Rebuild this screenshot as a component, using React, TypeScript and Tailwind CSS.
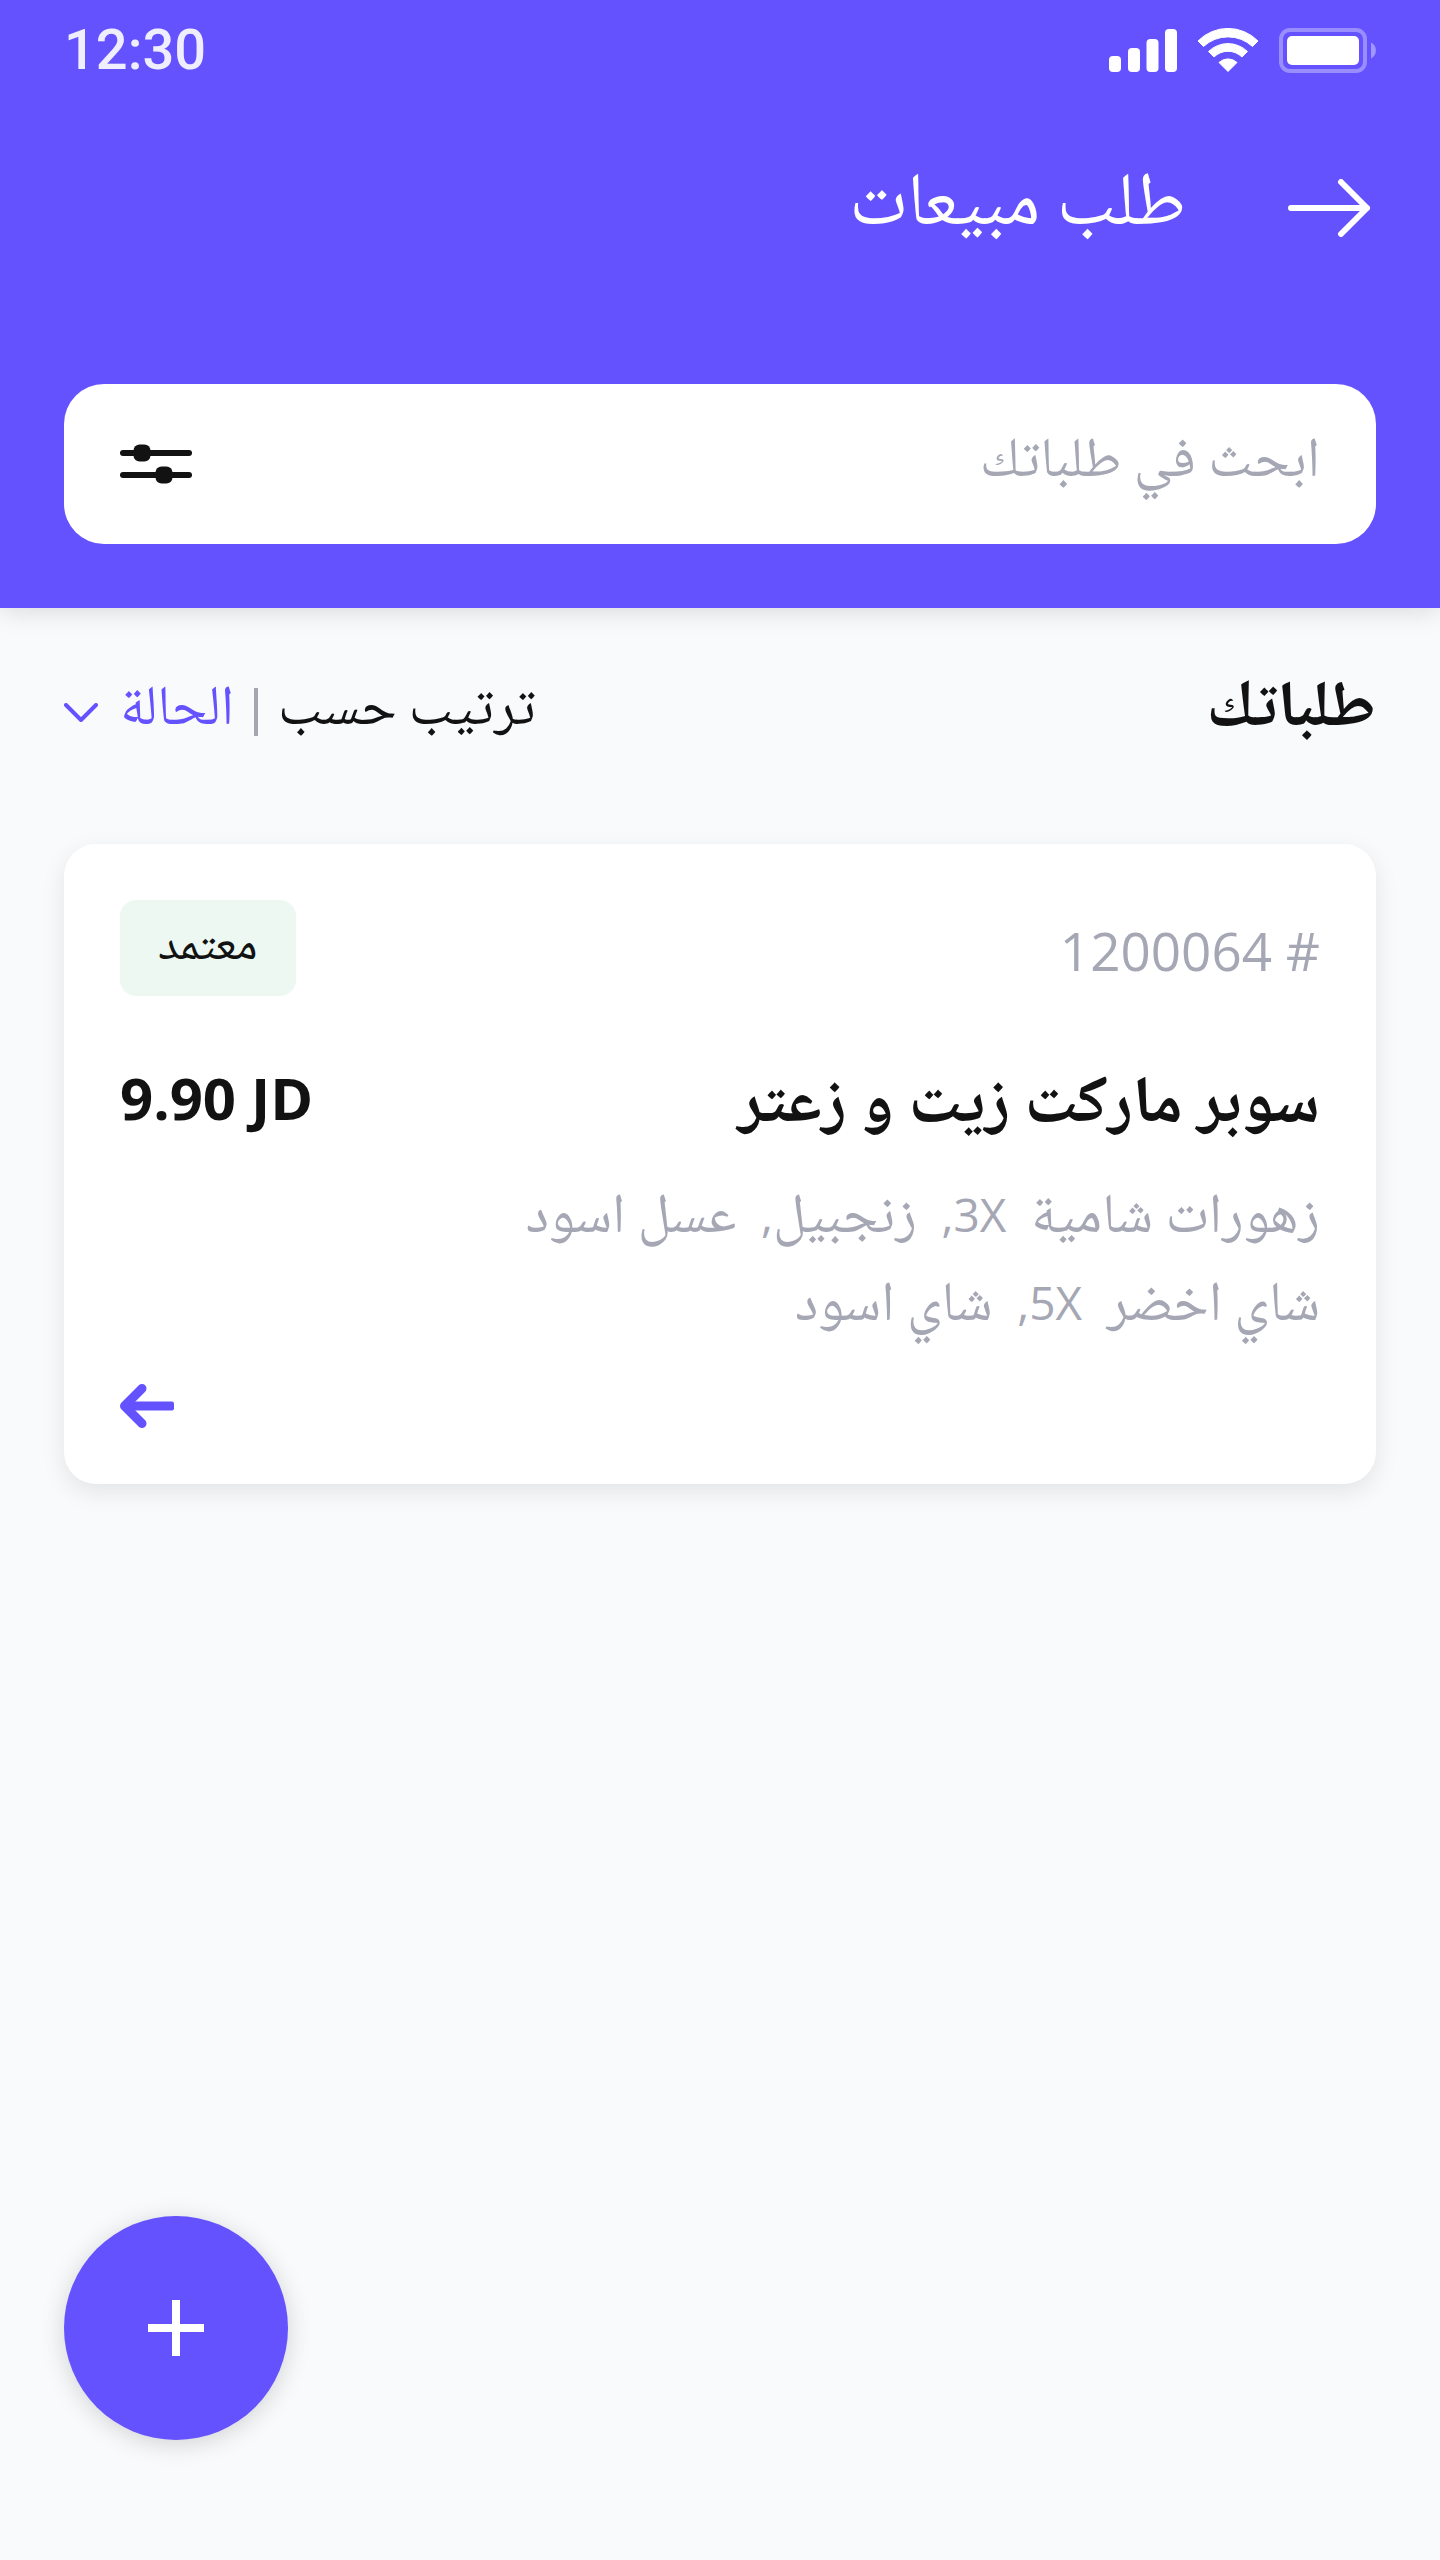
import React from "react";

const arabic = "font-['Noto_Naskh_Arabic','Noto_Sans_Arabic','DejaVu_Sans',sans-serif]";
const latin = "font-['Open_Sans','Noto_Sans',sans-serif]";

function SignalIcon() {
  return (
    <svg width="68" height="44" viewBox="0 0 68 44" fill="currentColor" aria-hidden="true">
      <rect x="0" y="28" width="12" height="16" rx="4" />
      <rect x="19" y="20" width="12" height="24" rx="4" />
      <rect x="37.5" y="11" width="12" height="33" rx="4" />
      <rect x="56" y="1" width="12" height="43" rx="4" />
    </svg>
  );
}

function WifiIcon() {
  return (
    <svg width="62" height="44" viewBox="0 0 62 44" fill="currentColor" stroke="currentColor" strokeWidth="1" strokeLinejoin="round" aria-hidden="true">
      <path d="M1 13A42 42 0 0 1 61 13L55.500 18.500A36 36 0 0 0 6.500 18.500Z" />
      <path d="M11.500 23.500A28 28 0 0 1 50.500 23.500L45 29A20 20 0 0 0 17 29Z" />
      <path d="M22 34.500A13 13 0 0 1 40 34.500L31 43.500Z" />
    </svg>
  );
}

function BatteryIcon() {
  return (
    <svg width="97" height="45" viewBox="0 0 97 45" aria-hidden="true">
      <rect x="2" y="2" width="84" height="41" rx="9" fill="none" stroke="#fff" strokeOpacity="0.35" strokeWidth="4" />
      <rect x="8" y="8" width="72" height="29" rx="5" fill="#fff" />
      <path d="M92 14.500A9 9 0 0 1 92 30.500Z" fill="#fff" fillOpacity="0.4" />
    </svg>
  );
}

function StatusBar() {
  return (
    <div dir="ltr" className="flex h-25 items-center justify-between px-16 text-white">
      <time className="font-['Roboto',sans-serif] text-[56px] leading-none font-medium opacity-90">12:30</time>
      <div className="flex items-center gap-5">
        <SignalIcon />
        <WifiIcon />
        <BatteryIcon />
      </div>
    </div>
  );
}

function Header() {
  return (
    <header className="bg-[#6552ff] pb-16 text-white shadow-[0_4px_24px_rgba(0,0,0,0.12)]">
      <StatusBar />
      <div className="mt-15 flex h-24 items-center gap-[102px] px-[70px]">
        <button type="button" aria-label="رجوع">
          <svg width="82" height="58" viewBox="0 0 82 58" fill="none" stroke="currentColor" strokeWidth="6" strokeLinecap="round" strokeLinejoin="round" className="block">
            <path d="M3 29H79M53 3L79 29L53 55" />
          </svg>
        </button>
        <h1 className="text-[75px] leading-24">طلب مبيعات</h1>
      </div>
      <form role="search" className="mx-16 mt-32 flex h-40 items-center gap-8 rounded-[40px] bg-white px-14" onSubmit={(e) => e.preventDefault()}>
        <input
          type="search"
          aria-label="ابحث في طلباتك"
          placeholder="ابحث في طلباتك"
          className="h-full min-w-0 flex-1 bg-transparent text-[56px] text-[#121212] outline-none placeholder:text-[#a5a7b4] placeholder:opacity-100"
        />
        <button type="button" aria-label="تصفية" className="text-[#121212]">
          <svg width="72" height="40" viewBox="0 0 72 40" fill="currentColor">
            <rect x="0" y="6" width="72" height="6" rx="3" />
            <rect x="13.500" y="0.500" width="17" height="17" rx="6" />
            <rect x="0" y="28" width="72" height="6" rx="3" />
            <rect x="35.500" y="22.500" width="17" height="17" rx="6" />
          </svg>
        </button>
      </form>
    </header>
  );
}

function SortControl() {
  return (
    <div className="flex items-center gap-5 text-[56px] leading-[76px]">
      <label htmlFor="sort">ترتيب حسب</label>
      <span className="h-12 w-1 bg-[#a5a7b4]" />
      <div className="flex items-center gap-[22px] text-[#6552ff]">
        <select id="sort" className="h-19 appearance-none bg-transparent outline-none">
          <option>الحالة</option>
        </select>
        <svg width="34" height="19" viewBox="0 0 34 19" fill="none" stroke="currentColor" strokeWidth="4" strokeLinecap="round" strokeLinejoin="round" aria-hidden="true">
          <path d="M2 2L17 17L32 2" />
        </svg>
      </div>
    </div>
  );
}

function Latin({ children }: { children: React.ReactNode }) {
  return <span className={`${latin} text-[46px] leading-none`}>{children}</span>;
}

function OrderCard() {
  return (
    <article className="mt-[94px] rounded-[32px] bg-white p-14 shadow-[0_8px_24px_rgba(0,0,0,0.09)]">
      <div className="flex h-24 items-center justify-between">
        <p dir="ltr" className={`${latin} pt-1 text-[53px] leading-none text-[#a5a7b4]`}>1200064 #</p>
        <span className="flex h-24 items-center rounded-2xl bg-[#edf8f3] px-[38px] pt-0.5 text-[47px] leading-none">معتمد</span>
      </div>
      <div className="mt-16 flex h-24 items-start justify-between">
        <h3 className="text-[66px] leading-24 font-bold">سوبر ماركت زيت و زعتر</h3>
        <p dir="ltr" className={`${latin} text-[58px] leading-[76px] font-bold`}>9.90 JD</p>
      </div>
      <div className="mt-5 text-[56px] leading-[88px] whitespace-pre-wrap text-[#a5a7b4]">
        <p>زهورات شامية{"  "}<Latin>3X,</Latin>{"  "}زنجبيل<Latin>,</Latin>{"  "}عسل اسود</p>
        <p>شاي اخضر{"  "}<Latin>5X,</Latin>{"  "}شاي اسود</p>
      </div>
      <div className="mt-8 flex justify-end">
        <button type="button" aria-label="عرض الطلب" className="text-[#6552ff]">
          <svg width="54" height="44" viewBox="0 0 54 44" fill="none" stroke="currentColor" strokeWidth="9" strokeLinecap="round" strokeLinejoin="round" className="block">
            <path d="M22 4.500L4.500 22L22 39.500" />
            <rect x="10" y="17.500" width="44" height="9" rx="2" fill="currentColor" stroke="none" />
          </svg>
        </button>
      </div>
    </article>
  );
}

export default function App() {
  return (
    <div dir="rtl" className={`${arabic} flex min-h-screen flex-col bg-[#f9fafc] text-[#121212]`}>
      <Header />
      <main className="flex flex-1 flex-col px-16 pt-[66px] pb-30">
        <div className="flex h-19 items-center justify-between">
          <h2 className="text-[65px] leading-[76px] font-bold">طلباتك</h2>
          <SortControl />
        </div>
        <OrderCard />
        <button type="button" aria-label="إضافة طلب" className="mt-auto flex size-56 items-center justify-center self-end rounded-full bg-[#6552ff] text-white shadow-[0_4px_24px_rgba(0,0,0,0.16)]">
          <svg width="56" height="56" viewBox="0 0 56 56" fill="none" stroke="currentColor" strokeWidth="8">
            <path d="M28 0V56M0 28H56" />
          </svg>
        </button>
      </main>
    </div>
  );
}
